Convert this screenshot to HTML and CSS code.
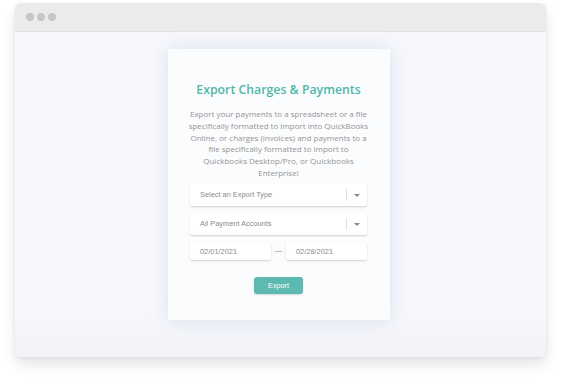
FILE: index.html
```html
<!DOCTYPE html>
<html lang="en">
<head>
<meta charset="UTF-8">
<title>Export Charges &amp; Payments</title>
<link rel="stylesheet" href="styles.css">
</head>
<body>
<div class="window">
	<div class="titlebar">
		<span class="dot"></span>
		<span class="dot"></span>
		<span class="dot"></span>
	</div>
	<div class="viewport">
		<div class="card">
			<h1 class="title">Export Charges &amp; Payments</h1>
			<p class="desc">Export your payments to a spreadsheet or a file specifically formatted to import into QuickBooks Online, or charges (invoices) and payments to a file specifically formatted to import to Quickbooks Desktop/Pro, or Quickbooks Enterprise!</p>
			<div class="select">
				<span class="select-text">Select an Export Type</span>
				<span class="select-arrow"></span>
			</div>
			<div class="select">
				<span class="select-text">All Payment Accounts</span>
				<span class="select-arrow"></span>
			</div>
			<div class="dates">
				<div class="date">02/01/2021</div>
				<span class="dash"></span>
				<div class="date">02/28/2021</div>
			</div>
			<div class="btn-wrapper">
				<span class="btn">Export</span>
			</div>
		</div>
	</div>
</div>
</body>
</html>
```

FILE: styles.css
```css
html,body{
	margin:0;
	padding:0;
	background:#fff;
}
body{
	padding:3px 17px 0 15px;
	height:384px;
	box-sizing:border-box;
}
.window{
	height:354px;
	border-radius:6px;
	overflow:hidden;
	background:#f7f8fc;
	box-shadow:0 8px 14px rgba(0,0,0,0.10),0 1px 4px rgba(0,0,0,0.06);
	display:flex;
	flex-direction:column;
}
.titlebar{
	height:28px;
	background:#ebebeb;
	border-bottom:1px solid #e2e2e2;
	display:flex;
	align-items:center;
	gap:3px;
	padding-left:11px;
	flex-shrink:0;
}
.dot{
	width:8px;
	height:8px;
	border-radius:50%;
	background:#c6c6c6;
}
.viewport{
	flex:1;
	padding-top:17px;
	background:linear-gradient(#f7f8fc 85%,#f2f3f7);
}
.card{
	width:222px;
	height:271px;
	margin-left:153px;
	box-sizing:border-box;
	background:#fbfcfe;
	box-shadow:0 0 18px rgba(120,140,200,0.22);
	padding:31px 23px 0 22px;
	font-family:"Open Sans",sans-serif;
}
.title{
	margin:0;
	font-size:12.3px;
	font-weight:600;
	color:#4fb6aa;
	text-align:center;
	line-height:20px;
}
.desc{
	margin:8px -3px 0;
	font-size:8px;
	line-height:11.8px;
	color:#949494;
	text-align:center;
}
.select{
	height:22px;
	margin-top:5px;
	background:#fff;
	box-shadow:0 1px 2px rgba(0,0,0,0.18);
	border-radius:2px;
	display:flex;
	align-items:center;
	font-family:"Liberation Sans",Arial,sans-serif;
}
.select+.select{
	margin-top:7px;
}
.select-text{
	flex:1;
	padding-left:10px;
	font-size:7.4px;
	color:#8a8a8a;
}
.select-arrow{
	width:20px;
	height:12px;
	border-left:1px solid #ddd;
	position:relative;
}
.select-arrow:after{
	content:"";
	position:absolute;
	left:7px;
	top:5px;
	border-left:3px solid transparent;
	border-right:3px solid transparent;
	border-top:3px solid #888;
}
.dates{
	display:flex;
	align-items:center;
	margin-top:8px;
	font-family:"Liberation Sans",Arial,sans-serif;
}
.date{
	width:81px;
	height:17px;
	line-height:17px;
	background:#fff;
	box-shadow:0 1px 2px rgba(0,0,0,0.18);
	border-radius:2px;
	padding-left:10px;
	box-sizing:border-box;
	font-size:7.4px;
	color:#8a8a8a;
}
.dash{
	flex:1;
	height:1px;
	margin:0 4px;
	background:#bbb;
}
.btn-wrapper{
	text-align:center;
	margin-top:17px;
	line-height:0;
}
.btn{
	display:inline-block;
	width:49px;
	height:17px;
	line-height:17px;
	border-radius:3px;
	background:#5cbab0;
	color:#fff;
	font-family:"Liberation Sans",Arial,sans-serif;
	font-size:7.2px;
	box-shadow:0 1px 2px rgba(0,0,0,0.15);
}
```
